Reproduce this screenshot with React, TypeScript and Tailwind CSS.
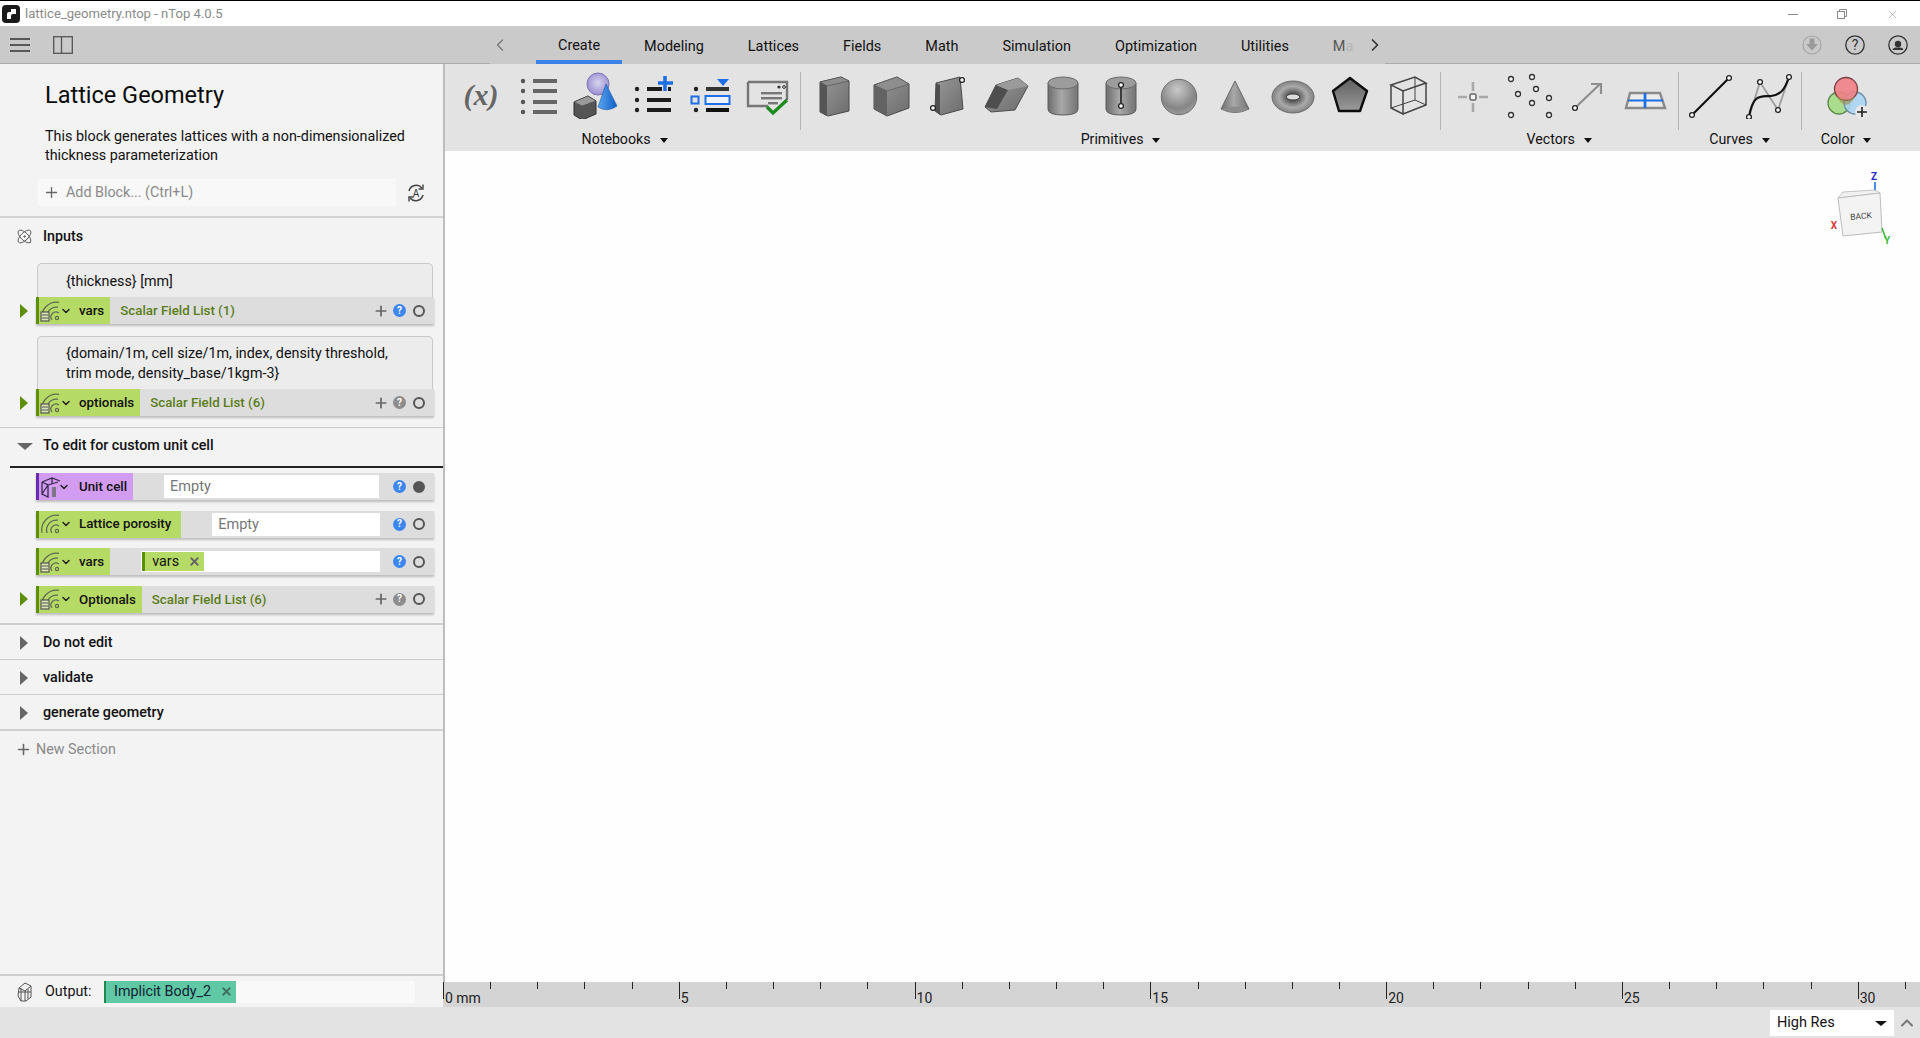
import React from 'react';
import { Atom, ChevronDown, ChevronLeft, ChevronRight, ChevronUp, Plus, X } from 'lucide-react';

const Defs = () => (
  <svg className="block h-0 w-0">
    <defs>
      <linearGradient id="face" x1="0" y1="0" x2="1" y2="1">
        <stop offset="0" stopColor="#9a9a9a" />
        <stop offset="1" stopColor="#6c6c6c" />
      </linearGradient>
      <linearGradient id="cyl" x1="0" y1="0" x2="1" y2="0">
        <stop offset="0" stopColor="#6d6d6d" />
        <stop offset="0.45" stopColor="#a8a8a8" />
        <stop offset="1" stopColor="#737373" />
      </linearGradient>
      <radialGradient id="ball" cx="0.45" cy="0.3" r="0.75">
        <stop offset="0" stopColor="#c9c9c9" />
        <stop offset="0.7" stopColor="#858585" />
        <stop offset="1" stopColor="#a3a3a3" />
      </radialGradient>
      <radialGradient id="purple" cx="0.5" cy="0.45" r="0.6">
        <stop offset="0" stopColor="#d6d3ee" />
        <stop offset="1" stopColor="#9489cf" />
      </radialGradient>
      <linearGradient id="blueCone" x1="0" y1="0" x2="1" y2="0">
        <stop offset="0" stopColor="#5aa5ee" />
        <stop offset="1" stopColor="#0f5fc8" />
      </linearGradient>
      <radialGradient id="torus" cx="0.5" cy="0.5" r="0.55">
        <stop offset="0.2" stopColor="#4f4f4f" />
        <stop offset="0.6" stopColor="#aaaaaa" />
        <stop offset="1" stopColor="#777777" />
      </radialGradient>
      <linearGradient id="pent" x1="0" y1="0" x2="0" y2="1">
        <stop offset="0" stopColor="#5d5d5d" />
        <stop offset="1" stopColor="#9b9b9b" />
      </linearGradient>
    </defs>
  </svg>
);

const Ico = ({ children }: { children: React.ReactNode }) => (
  <svg width="48" height="48" viewBox="0 0 48 48" fill="none">
    {children}
  </svg>
);

const Handle = ({ x, y }: { x: number; y: number }) => (
  <circle cx={x} cy={y} r="2.4" fill="#fff" stroke="#222" strokeWidth="1.3" />
);

const FxIcon = () => (
  <span className="font-['Liberation_Serif',serif] text-[30px] font-bold italic leading-none text-[#666]">(x)</span>
);

const ListIcon = () => (
  <Ico>
    {[10, 20, 31, 41].map((y) => (
      <g key={y}>
        <circle cx="9" cy={y} r="2.2" fill="#555" />
        <rect x="19" y={y - 2} width="24" height="4" fill="#666" />
      </g>
    ))}
  </Ico>
);

const ShapesIcon = () => (
  <Ico>
    <circle cx="26" cy="13" r="11" fill="url(#purple)" stroke="#7d73b5" />
    <path d="M34 13 L26 36 Q35 42 45 35 Z" fill="url(#blueCone)" stroke="#1c5aa8" strokeWidth="0.6" />
    <path d="M2 31 L16 25 L24 30 L24 43 L10 49 L2 44 Z" fill="#555" stroke="#333" />
    <path d="M2 31 L16 25 L24 30 L10 35 Z" fill="#9a9a9a" stroke="#444" strokeWidth="0.6" />
  </Ico>
);

const ListPlusIcon = () => (
  <Ico>
    {[18, 29, 39].map((y) => (
      <g key={y}>
        <circle cx="8" cy={y} r="2.2" fill="#222" />
        <rect x="18" y={y - 2} width="24" height="4" fill="#1c1c1c" />
      </g>
    ))}
    <path d="M36 4 V21 M28 12 H44" stroke="#e3e3e3" strokeWidth="6" />
    <path d="M36 5 V20 M29 12 H44" stroke="#1e6fe6" strokeWidth="3.6" />
  </Ico>
);

const ListPickIcon = () => (
  <Ico>
    <circle cx="9" cy="18" r="2.2" fill="#222" />
    <circle cx="9" cy="39" r="2.2" fill="#222" />
    <rect x="19" y="16" width="23" height="4" fill="#333" />
    <rect x="19" y="37" width="23" height="4" fill="#111" />
    <rect x="4.5" y="25.5" width="7" height="7" stroke="#1e6fe6" strokeWidth="2" />
    <rect x="18.5" y="25" width="24" height="8" stroke="#1e6fe6" strokeWidth="2" fill="#eef3fb" />
    <path d="M30 8 H42 L36 15 Z" fill="#1e6fe6" />
  </Ico>
);

const CheckIcon = () => (
  <Ico>
    <path d="M4 11 H43 V29 M4 11 V35 H24" stroke="#767676" strokeWidth="2.4" />
    <circle cx="35" cy="16" r="1.6" fill="#333" />
    <circle cx="40" cy="16" r="1.4" stroke="#333" />
    <rect x="17" y="21" width="21" height="2.4" fill="#777" />
    <rect x="17" y="26" width="21" height="2.4" fill="#777" />
    <rect x="24" y="31" width="10" height="2.4" fill="#777" />
    <path d="M23 37 L29 43 L43 30" stroke="#e3e3e3" strokeWidth="6" />
    <path d="M23 36 L29 42 L43 29" stroke="#1f8a1f" strokeWidth="3.4" />
  </Ico>
);

const TallBox = () => (
  <Ico>
    <path d="M10 11 L31 6 L39 10 V40 L18 45 L10 41 Z" fill="url(#face)" stroke="#4a4a4a" strokeWidth="1" />
    <path d="M10 11 L31 6 L39 10 L17 15 Z" fill="#8d8d8d" stroke="#555" strokeWidth="0.7" />
    <path d="M10 11 L17 15 V45 L10 41 Z" fill="#555" />
  </Ico>
);

const CubeBox = () => (
  <Ico>
    <path d="M7 14 L30 6 L42 13 V37 L20 45 L7 38 Z" fill="url(#face)" stroke="#4a4a4a" strokeWidth="1" />
    <path d="M7 14 L30 6 L42 13 L20 20 Z" fill="#8e8e8e" stroke="#5a5a5a" strokeWidth="0.7" />
    <path d="M7 14 L20 20 V45 L7 38 Z" fill="#636363" />
  </Ico>
);

const HandleBox = () => (
  <Ico>
    <path d="M12 12 L36 6 L39 38 L17 44 L11 40 Z" fill="url(#face)" stroke="#4a4a4a" strokeWidth="1" />
    <path d="M12 12 L16 14 V44 L11 40 Z" fill="#4f4f4f" />
    <Handle x={38} y={9} />
    <Handle x={9} y={37} />
  </Ico>
);

const SkewBox = () => (
  <Ico>
    <path d="M14 14 L36 7 L46 15 L33 39 L9 41 L3 36 Z" fill="url(#face)" stroke="#4f4f4f" strokeWidth="1" />
    <path d="M14 14 L26 19 L15 38 L3 36 Z" fill="#4e4e4e" />
    <path d="M14 14 L36 7 L46 15 L26 19 Z" fill="#9a9a9a" />
  </Ico>
);

const Cylinder = () => (
  <Ico>
    <path d="M9 12 V38 Q9 44 24 44 Q39 44 39 38 V12 Z" fill="url(#cyl)" stroke="#5c5c5c" />
    <ellipse cx="24" cy="12" rx="15" ry="6" fill="#9c9c9c" stroke="#6a6a6a" />
  </Ico>
);

const HandleCylinder = () => (
  <Ico>
    <path d="M9 12 V38 Q9 44 24 44 Q39 44 39 38 V12 Z" fill="url(#cyl)" stroke="#5c5c5c" />
    <ellipse cx="24" cy="12" rx="15" ry="6" fill="#9c9c9c" stroke="#6a6a6a" />
    <path d="M24 14 V35" stroke="#111" strokeWidth="1.4" />
    <Handle x={24} y={14} />
    <Handle x={24} y={35} />
  </Ico>
);

const Sphere = () => (
  <Ico>
    <circle cx="25" cy="26" r="17.7" fill="url(#ball)" stroke="#6e6e6e" />
  </Ico>
);

const Cone = () => (
  <Ico>
    <path d="M24 10 L10 38 Q24 45 38 38 Z" fill="url(#cyl)" stroke="#666" />
    <path d="M10 38 Q24 33 38 38 Q24 45 10 38 Z" fill="#8c8c8c" />
  </Ico>
);

const Torus = () => (
  <Ico>
    <ellipse cx="24" cy="26" rx="21" ry="16" fill="url(#torus)" stroke="#6d6d6d" />
    <ellipse cx="24" cy="26" rx="6.7" ry="3" fill="#dcdcdc" stroke="#444" />
  </Ico>
);

const Pentagon = () => (
  <Ico>
    <path d="M24 7 L41 20 L34 40 L13 40 L7 20 Z" fill="url(#pent)" stroke="#0c0c0c" strokeWidth="2.4" strokeLinejoin="round" />
  </Ico>
);

const Wire = () => (
  <Ico>
    <g stroke="#444" strokeWidth="1.5">
      <path d="M7 14 L31 6 L42 12 L19 20 Z" />
      <path d="M7 14 V37 L19 43 V20 M42 12 V34 L19 43" />
      <path d="M31 6 V29 L7 37 M31 29 L42 34" strokeWidth="1" />
    </g>
  </Ico>
);

const PointIcon = () => (
  <Ico>
    <path d="M24 11 V20 M24 32 V41 M9 26 H18 M30 26 H39" stroke="#a9a9a9" strokeWidth="2.6" />
    <rect x="21" y="23" width="6" height="6" rx="1.5" fill="#f2f2f2" stroke="#666" strokeWidth="1.5" />
  </Ico>
);

const PointsIcon = () => (
  <Ico>
    {[
      [5, 8], [26, 6], [12, 23], [30, 18], [26, 32], [43, 27], [5, 44], [43, 44],
    ].map(([x, y]) => (
      <circle key={`${x}-${y}`} cx={x} cy={y} r="2.5" fill="#f4f4f4" stroke="#333" strokeWidth="1.3" />
    ))}
  </Ico>
);

const VectorIcon = () => (
  <Ico>
    <path d="M12 36 L36 13 M27 13 H37 V23" stroke="#8f8f8f" strokeWidth="2.2" />
    <Handle x={11} y={37} />
  </Ico>
);

const PlaneIcon = () => (
  <Ico>
    <path d="M9 22 H39 L44 37 H5 Z" fill="#ececec" stroke="#8a8a8a" strokeWidth="2.4" />
    <path d="M24 22 V37" stroke="#1e6fe6" strokeWidth="2.8" />
    <path d="M7 29.5 H42" stroke="#1e6fe6" strokeWidth="2.2" />
  </Ico>
);

const LineIcon = () => (
  <Ico>
    <path d="M5 44 L42 7" stroke="#111" strokeWidth="2.2" />
    <Handle x={5} y={44} />
    <Handle x={42} y={7} />
  </Ico>
);

const CurveIcon = () => (
  <Ico>
    <path d="M5 46 L16 11 L34 39 L45 6" stroke="#9c9c9c" strokeWidth="1.8" />
    <path d="M5 46 C9 22 17 26 27 25 C37 24 41 18 45 6" stroke="#111" strokeWidth="2.2" />
    <Handle x={5} y={46} />
    <Handle x={16} y={11} />
    <Handle x={34} y={39} />
    <Handle x={45} y={6} />
  </Ico>
);

const ColorIcon = () => (
  <Ico>
    <circle cx="17" cy="32" r="11" fill="#a8dc8a" fillOpacity="0.95" stroke="#5c8a4c" strokeWidth="1.3" />
    <circle cx="33" cy="32" r="11" fill="#a8d4f4" fillOpacity="0.85" stroke="#6d90a8" strokeWidth="1.3" />
    <circle cx="24" cy="18" r="11.5" fill="#ee8086" fillOpacity="0.9" stroke="#7c3f42" strokeWidth="1.3" />
    <path d="M15 25 Q24 32 33 25 Q30 33 24 34 Q18 33 15 25 Z" fill="#9c8b4f" fillOpacity="0.6" />
    <circle cx="40" cy="41" r="7" fill="#e8e8e8" />
    <path d="M40 36 V46 M35 41 H45" stroke="#222" strokeWidth="1.6" />
  </Ico>
);

const BlockIcon = ({ kind }: { kind: 'field' | 'arc' | 'cell' }) => {
  if (kind === 'cell') {
    return (
      <svg width="22" height="22" viewBox="0 0 22 22" fill="none" stroke="#3a2a4a" strokeWidth="1.3" className="shrink-0">
        <path d="M2 6 L12 2 L20 5 M2 6 V18 L8 21 V9 L2 6 M8 9 L18 6 M12 2 V8 M2 18 L8 9" />
        <rect x="12" y="11" width="4" height="10" fill="#7d7488" stroke="none" />
      </svg>
    );
  }
  return (
    <svg width="24" height="22" viewBox="0 0 24 22" fill="none" stroke="#5f6a50" strokeWidth="1.2" className="shrink-0">
      <path d="M2 20 A15 15 0 0 1 19 2.3" />
      <path d="M7 20 A10 10 0 0 1 18 7.2" />
      <path d="M12 20 A5 5 0 0 1 19 13" />
      <circle cx="17" cy="18" r="1.6" />
      {kind === 'field' && (
        <g>
          <rect x="1" y="12" width="8" height="9" fill="#d8e6b4" stroke="#555" />
          <path d="M2 15 H8 M2 18 H8" stroke="#555" />
        </g>
      )}
    </svg>
  );
};

const RingDot = ({ filled }: { filled?: boolean }) => (
  <span className={`h-[12px] w-[12px] rounded-full border-2 border-[#555] ${filled ? 'bg-[#555]' : ''}`} />
);

const Help = ({ blue }: { blue?: boolean }) => (
  <span
    className={`flex h-[13px] w-[13px] items-center justify-center rounded-full text-[10px] font-bold leading-none text-white ${
      blue ? 'bg-[#3b86f0]' : 'bg-[#8c8c8c]'
    }`}
  >
    ?
  </span>
);

const Arrow = ({ color }: { color: string }) => (
  <span className="flex w-[36px] shrink-0 justify-end pr-[8px]">
    <span className={`h-0 w-0 border-y-[7px] border-l-[8px] border-y-transparent ${color}`} />
  </span>
);

type RowProps = {
  label: string;
  kind: 'field' | 'arc' | 'cell';
  purple?: boolean;
  expand?: boolean;
  type?: string;
  children?: React.ReactNode;
  blueHelp?: boolean;
  plus?: boolean;
  filled?: boolean;
  wide?: boolean;
};

const BlockRow = ({ label, kind, purple, expand, type, children, blueHelp, plus, filled, wide }: RowProps) => (
  <div className="flex items-center">
    {expand ? <Arrow color="border-l-[#5e8f0c]" /> : <span className="w-[36px] shrink-0" />}
    <div className="flex h-[27px] w-[398px] items-stretch bg-[#dddddd] shadow-[0_2px_2px_rgba(0,0,0,0.22)]">
      <div
        className={`flex items-center border-l-[3px] ${wide ? 'pr-[10px]' : 'pr-[6px]'} ${
          purple ? 'border-[#6a2bb0] bg-[#d29cf2]' : 'border-[#5e8f0c] bg-[#b6da66]'
        }`}
      >
        <span className="flex w-[40px] items-center pl-[1px]">
          <BlockIcon kind={kind} />
          <ChevronDown size={12} strokeWidth={3} className="-ml-[4px] shrink-0 text-[#222]" />
        </span>
        <span className="whitespace-nowrap text-[13.3px] font-medium text-[#111]">{label}</span>
      </div>
      {type && <span className="ml-[10px] self-center whitespace-nowrap text-[13.3px] font-medium text-[#5b7d18]">{type}</span>}
      {children}
      <div className="ml-auto flex items-center">
        {plus && <Plus size={16} strokeWidth={2.6} className="text-[#666]" />}
        <span className="ml-[4px] mr-[7px]">
          <Help blue={blueHelp} />
        </span>
        <RingDot filled={filled} />
        <span className="w-[9px]" />
      </div>
    </div>
  </div>
);

const Card = ({ children }: { children: React.ReactNode }) => (
  <div className="ml-[37px] w-[396px] rounded-t-[5px] border border-b-0 border-[#c9c9c9] bg-[#ececec] pl-[28px] pr-[20px] text-[14.3px] leading-[20px] text-[#111]">
    {children}
  </div>
);

const SectionRow = ({ title, thick }: { title: string; thick?: boolean }) => (
  <div className={`flex items-center border-b-[#cfcfcf] pt-[2px] ${thick ? 'h-[36px] border-b-2' : 'h-[35px] border-b'}`}>
    <span className="ml-[20px] h-0 w-0 border-y-[7px] border-l-[8px] border-y-transparent border-l-[#666]" />
    <span className="ml-[15px] text-[14.3px] font-medium text-[#111]">{title}</span>
  </div>
);

const Sidebar = () => (
  <aside className="relative z-10 flex w-[445px] shrink-0 flex-col border-r-2 border-[#bdbdbd] bg-[#f3f3f3]">
    <h1 className="ml-[45px] mt-[17px] text-[23.5px] font-normal leading-[28px] text-[#0c0c0c]">Lattice Geometry</h1>
    <p className="ml-[45px] mt-[18px] w-[380px] text-[14.35px] leading-[19px] text-[#111]">
      This block generates lattices with a non-dimensionalized thickness parameterization
    </p>
    <div className="mt-[14px] flex items-center">
      <div className="ml-[38px] flex h-[27px] w-[358px] items-center bg-[#f8f8f8] pl-[5px] text-[#8a8a8a]">
        <Plus size={17} strokeWidth={1.8} className="text-[#666]" />
        <span className="ml-[6px] text-[14.3px]">Add Block... (Ctrl+L)</span>
      </div>
      <svg width="20" height="20" viewBox="0 0 20 20" fill="none" stroke="#444" strokeWidth="1.5" className="ml-[10px]">
        <path d="M3 8 A7.5 7.5 0 0 1 16 5 M17 12 A7.5 7.5 0 0 1 4 15" />
        <path d="M17 1.5 V6 H12.5 M3 18.5 V14 H7.5" strokeWidth="1.4" />
        <text x="10" y="14" textAnchor="middle" fontSize="10" fontFamily="Roboto, sans-serif" fill="#333" stroke="none">A</text>
      </svg>
    </div>
    <div className="mt-[10px] border-b-2 border-[#d2d2d2]" />
    <div className="flex h-[36px] items-center pt-[1px]">
      <Atom size={17} strokeWidth={1.4} className="ml-[16px] text-[#555]" />
      <span className="ml-[10px] text-[14.3px] font-medium text-[#111]">Inputs</span>
    </div>
    <div className="mt-[9px] flex flex-col">
      <Card>
        <div className="h-[33px] pt-[7px]">{'{thickness} [mm]'}</div>
      </Card>
      <BlockRow label="vars" kind="field" expand blueHelp plus type="Scalar Field List (1)" />
      <div className="mt-[12px]">
        <Card>
          <div className="h-[52px] pt-[6px]">{'{domain/1m, cell size/1m, index, density threshold, trim mode, density_base/1kgm-3}'}</div>
        </Card>
      </div>
      <BlockRow label="optionals" kind="field" expand plus type="Scalar Field List (6)" />
    </div>
    <div className="mt-[11px] border-b border-[#cfcfcf]" />
    <div className="ml-[10px] flex h-[40px] items-center border-b-2 border-[#222] pb-[2px]">
      <span className="ml-[7px] h-0 w-0 border-x-[8px] border-t-[7px] border-x-transparent border-t-[#666]" />
      <span className="ml-[10px] text-[14.3px] font-medium text-[#111]">To edit for custom unit cell</span>
    </div>
    <div className="mt-[5px] flex flex-col gap-[10.67px]">
      <BlockRow label="Unit cell" kind="cell" purple blueHelp filled>
        <div className="my-[2px] ml-[31px] flex w-[215px] items-center bg-white pl-[6px] pt-[1px] text-[14.5px] text-[#777]">Empty</div>
      </BlockRow>
      <BlockRow label="Lattice porosity" kind="arc" blueHelp wide>
        <div className="my-[2px] ml-[31px] flex w-[168px] items-center bg-white pl-[6px] pt-[1px] text-[14.5px] text-[#777]">Empty</div>
      </BlockRow>
      <BlockRow label="vars" kind="field" blueHelp>
        <div className="my-[3px] ml-[31px] flex w-[239px] items-stretch bg-white p-[1px]">
          <span className="flex w-[62px] items-center border-l-[3px] border-[#5e8f0c] bg-[#b6da66] pl-[7px] text-[14.3px] text-[#111]">
            vars
            <X size={13} strokeWidth={3.4} className="ml-[9px] text-[#666]" />
          </span>
        </div>
      </BlockRow>
      <BlockRow label="Optionals" kind="field" expand plus type="Scalar Field List (6)" />
    </div>
    <div className="mt-[10px] border-b-2 border-[#cfcfcf]" />
    <SectionRow title="Do not edit" />
    <SectionRow title="validate" />
    <SectionRow title="generate geometry" thick />
    <div className="flex h-[37px] items-center text-[#8a8a8a]">
      <Plus size={17} strokeWidth={2.2} className="ml-[15px] text-[#666]" />
      <span className="ml-[4px] text-[14.3px]">New Section</span>
    </div>
    <div className="mt-auto flex h-[33px] items-center border-t-2 border-[#cfcfcf]">
      <svg width="18" height="22" viewBox="0 0 18 22" fill="none" stroke="#555" strokeWidth="1" className="ml-[16px]">
        <path d="M3 7 L9 2 L15 5 V16 L10 20 H5 L2 15 Z M3 7 L9 10 L15 5 M9 10 V20 M2 11 L15 11 M5 7 V20 M12 8 V18" />
      </svg>
      <span className="ml-[11px] w-[59px] text-[14.3px] text-[#111]">Output:</span>
      <div className="flex h-[22px] w-[311px] items-stretch bg-[#f9f9f9]">
        <span className="flex w-[132px] items-center border-l-2 border-[#1f8a4c] bg-[#60c8a4] pl-[8px] text-[14.3px] text-[#123]">
          Implicit Body_2
          <X size={13} strokeWidth={3.4} className="ml-[9px] text-[#3f6e60]" />
        </span>
      </div>
    </div>
  </aside>
);

const groups: { label: string; icons: React.ReactNode[] }[] = [
  { label: 'Notebooks', icons: [<FxIcon />, <ListIcon />, <ShapesIcon />, <ListPlusIcon />, <ListPickIcon />, <CheckIcon />] },
  {
    label: 'Primitives',
    icons: [<TallBox />, <CubeBox />, <HandleBox />, <SkewBox />, <Cylinder />, <HandleCylinder />, <Sphere />, <Cone />, <Torus />, <Pentagon />, <Wire />],
  },
  { label: 'Vectors', icons: [<PointIcon />, <PointsIcon />, <VectorIcon />, <PlaneIcon />] },
  { label: 'Curves', icons: [<LineIcon />, <CurveIcon />] },
  { label: 'Color', icons: [<ColorIcon />] },
];

const Caret = () => <span className="ml-[9px] h-0 w-0 border-x-[4.5px] border-t-[5px] border-x-transparent border-t-[#111]" />;

const Ribbon = () => (
  <div className="flex h-[87px] shrink-0 bg-[#e3e3e3] pl-[7.4px] pt-[7px]">
    {groups.map((g, i) => (
      <React.Fragment key={g.label}>
        {i > 0 && <div className="mx-[3.6px] mt-[1px] h-[58px] w-px shrink-0 bg-[#b5b5b5]" />}
        <div className="flex flex-col items-center">
          <div className="flex">
            {g.icons.map((icon, j) => (
              <div key={j} className={`flex h-[48px] items-center justify-center ${g.label === 'Color' ? 'w-[82px]' : 'w-[57.4px]'}`}>
                {icon}
              </div>
            ))}
          </div>
          <div className="mt-[12px] flex h-[18px] items-center text-[14.2px] text-[#111]">
            {g.label}
            <Caret />
          </div>
        </div>
      </React.Fragment>
    ))}
  </div>
);

const NavCube = () => (
  <svg width="75" height="80" viewBox="0 0 75 80" fill="none" className="absolute right-[20px] top-[14px]">
    <path d="M13 33 L18 27 L50 25 L55 28 Z" fill="#f1f1f1" stroke="#c4c4c4" />
    <path d="M13 33 L55 28 L57 67 L18 71 Z" fill="#f3f3f3" stroke="#bcbcbc" />
    <text x="36" y="54" textAnchor="middle" fontSize="8.5" fontFamily="Roboto, sans-serif" fill="#444" transform="rotate(-5 36 51)">BACK</text>
    <path d="M50 17 L50 25" stroke="#1e6fe6" strokeWidth="1.6" />
    <path d="M57 63 L61 74" stroke="#3fb93f" strokeWidth="1.6" />
    <text x="49" y="15" textAnchor="middle" fontSize="10" fontWeight="700" fontFamily="Roboto, sans-serif" fill="#2c2cc8">Z</text>
    <text x="9" y="64" textAnchor="middle" fontSize="10" fontWeight="700" fontFamily="Roboto, sans-serif" fill="#d83a3a">X</text>
    <text x="62" y="79" textAnchor="middle" fontSize="10" fontWeight="700" fontFamily="Roboto, sans-serif" fill="#3fb93f">Y</text>
  </svg>
);

const ticks = Array.from({ length: 33 }, (_, i) => i);

const Ruler = () => (
  <div className="relative z-20 -ml-[2px] flex h-[25px] shrink-0 overflow-hidden bg-[#d4d4d4]">
    {ticks.map((i) => {
      const major = i % 5 === 0;
      return (
        <div key={i} className="flex w-[47.16px] shrink-0 items-start">
          <span className={`w-px bg-[#222] ${major ? 'h-[17px]' : 'h-[7px]'}`} />
          {major && (
            <span className="ml-[1px] mt-[8px] whitespace-nowrap text-[14px] leading-[16px] text-[#222]">
              {i === 0 ? '0 mm' : i}
            </span>
          )}
        </div>
      );
    })}
  </div>
);

const tabs = ['Modeling', 'Lattices', 'Fields', 'Math', 'Simulation', 'Optimization', 'Utilities'];

const TabBar = () => (
  <div className="flex h-[38px] shrink-0 bg-[#cacaca] text-[14.45px] text-[#111]">
    <div className="flex w-[490px] items-center border-b border-[#aaaaaa]">
      <svg width="20" height="16" viewBox="0 0 20 16" className="ml-[10px]" stroke="#333" strokeWidth="1.7">
        <path d="M0 2 H20 M0 8 H20 M0 14 H20" />
      </svg>
      <svg width="20" height="18" viewBox="0 0 20 18" fill="none" stroke="#555" strokeWidth="1.3" className="ml-[23px]">
        <rect x="0.7" y="0.7" width="18.6" height="16.6" />
        <path d="M8.5 1 V17" />
      </svg>
    </div>
    <div className="flex w-[46px] items-center">
      <ChevronLeft size={20} strokeWidth={1.6} className="text-[#777]" />
    </div>
    <div className="box-border flex items-center border-b-4 border-[#3b82e6] px-[22px] pt-[5px]">Create</div>
    {tabs.map((t) => (
      <div key={t} className="flex items-center px-[22px] pt-[4px]">
        {t}
      </div>
    ))}
    <div className="flex items-center pl-[22px] pt-[4px]">
      <span className="text-[#555]">M</span>
      <span className="text-[#b5b5b5]">a</span>
    </div>
    <div className="flex w-[32px] items-center pl-[12px]">
      <ChevronRight size={20} strokeWidth={2} className="text-[#333]" />
    </div>
    <div className="flex flex-1 items-center justify-end gap-[23px] border-b border-[#aaaaaa] pr-[12px]">
      <svg width="20" height="20" viewBox="0 0 20 20" fill="none">
        <circle cx="10" cy="10" r="9" stroke="#a5a5a5" strokeWidth="1.2" />
        <path d="M7.5 3.5 H12.5 V9 H16 L10 15.5 L4 9 H7.5 Z" fill="#9a9a9a" />
      </svg>
      <svg width="20" height="20" viewBox="0 0 20 20" fill="none">
        <circle cx="10" cy="10" r="9.2" stroke="#333" strokeWidth="1.3" />
        <text x="10" y="15" textAnchor="middle" fontSize="14" fontFamily="Roboto, sans-serif" fill="#333">?</text>
      </svg>
      <svg width="20" height="20" viewBox="0 0 20 20" fill="none">
        <circle cx="10" cy="10" r="9.2" stroke="#333" strokeWidth="1.3" />
        <circle cx="10" cy="9" r="3.2" fill="#333" />
        <path d="M4.5 15 Q5 12.5 7.5 12.5 H12.5 Q15 12.5 15.5 15 Z" fill="#333" />
      </svg>
    </div>
  </div>
);

const TitleBar = () => (
  <div className="flex h-[26px] shrink-0 items-center border-t border-black bg-white pt-[1px]">
    <svg width="18" height="18" viewBox="0 0 18 18" className="ml-[2px]">
      <rect width="18" height="18" rx="4" fill="#1a1a1a" />
      <path d="M5 14 V9 Q5 7 7 7 H9 V4 H14 V9 H11 Q9 9 9 11 V14 Z" fill="#fff" />
    </svg>
    <span className="ml-[5px] text-[13.1px] text-[#8a8a8a]">lattice_geometry.ntop - nTop 4.0.5</span>
    <div className="ml-auto flex items-center gap-[39px] pr-[21px] text-[#8a8a8a]">
      <span className="h-px w-[10px] bg-[#8a8a8a]" />
      <svg width="10" height="10" viewBox="0 0 10 10" fill="none" stroke="#8a8a8a">
        <rect x="0.5" y="2.5" width="7" height="7" />
        <path d="M2.5 2.5 V0.5 H9.5 V7.5 H7.5" />
      </svg>
      <X size={13} strokeWidth={1} />
    </div>
  </div>
);

export default function App() {
  return (
    <div className="flex h-screen w-screen flex-col overflow-hidden bg-[#e3e3e3] font-['Roboto',sans-serif]">
      <Defs />
      <TitleBar />
      <TabBar />
      <div className="flex min-h-0 flex-1">
        <Sidebar />
        <main className="flex min-w-0 flex-1 flex-col">
          <Ribbon />
          <div className="relative flex-1 bg-[#fefefe]">
            <NavCube />
          </div>
          <Ruler />
        </main>
      </div>
      <div className="flex h-[31px] shrink-0 items-center justify-end">
        <div className="flex h-[26px] w-[124px] items-center justify-between bg-white pl-[7px] pr-[7px] pt-[1px] text-[14.5px] text-[#111]">
          High Res
          <span className="h-0 w-0 border-x-[6px] border-t-[5px] border-x-transparent border-t-[#111]" />
        </div>
        <ChevronUp size={20} strokeWidth={2.4} className="mx-[3px] text-[#777]" />
      </div>
    </div>
  );
}
